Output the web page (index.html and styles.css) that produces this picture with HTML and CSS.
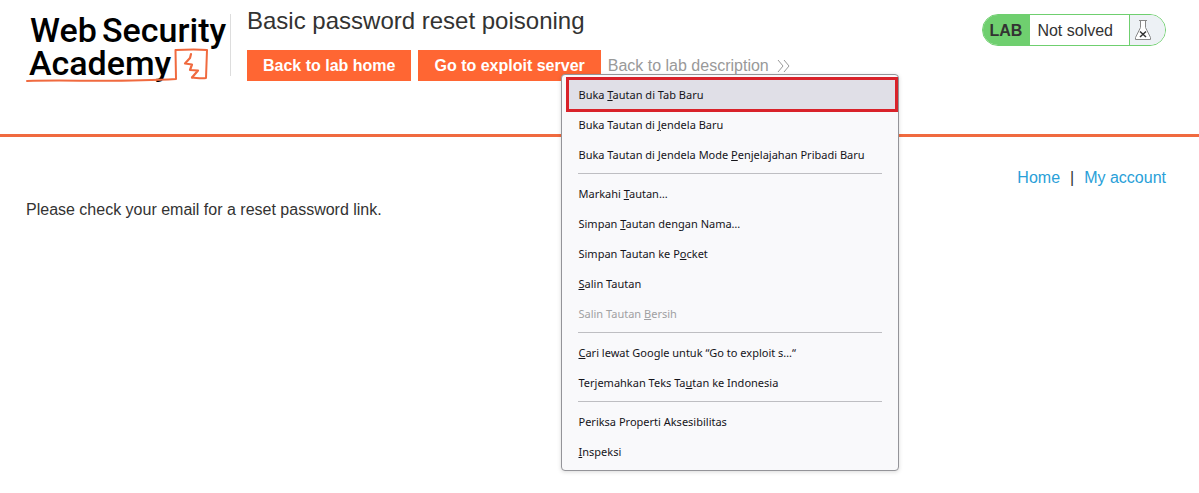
FILE: index.html
```html
<!DOCTYPE html>
<html lang="en">
<head>
<meta charset="utf-8">
<meta name="viewport" content="width=device-width, initial-scale=1">
<title>Basic password reset poisoning</title>
<link rel="stylesheet" href="styles.css">
</head>
<body>
<header class="lab-header">
  <a class="logo" href="#" aria-label="Web Security Academy">
    <svg class="logo-art" viewBox="0 0 205 90" width="205" height="90">
      <g class="logo-text">
        <text x="4" y="42">Web</text>
        <text x="76" y="42">Security</text>
        <text x="3" y="75">Academy</text>
      </g>
      <g fill="none" stroke="#f06a3f" stroke-linecap="round" stroke-linejoin="round">
        <path stroke-width="2" d="M1 81C40 79.500 90 82.500 150 79L149.500 50C160 49.500 170 49 181 50L180 78C176 79 172 78 166 77.500"/>
        <path stroke-width="2.200" d="M165 54L164 58L159 63.500L166 64.500L164 70L172 70.500L166 77.500"/>
      </g>
    </svg>
  </a>
  <div class="title-block">
    <h2 class="title">Basic password reset poisoning</h2>
    <nav class="actions">
      <a class="button" href="#">Back to lab home</a>
      <div class="menu-anchor">
        <a class="button" href="#">Go to exploit server</a>
        <div class="menu" role="menu">
          <button class="item active" role="menuitem">Buka <u>T</u>autan di Tab Baru</button>
          <button class="item" role="menuitem">Buka Tautan di <u>J</u>endela Baru</button>
          <button class="item" role="menuitem">Buka Tautan di Jendela Mode <u>P</u>enjelajahan Pribadi Baru</button>
          <hr class="rule">
          <button class="item" role="menuitem">Markahi <u>T</u>autan…</button>
          <button class="item" role="menuitem">Simpan <u>T</u>autan dengan Nama…</button>
          <button class="item" role="menuitem">Simpan Tautan ke P<u>o</u>cket</button>
          <button class="item" role="menuitem"><u>S</u>alin Tautan</button>
          <button class="item" role="menuitem" disabled>Salin Tautan <u>B</u>ersih</button>
          <hr class="rule">
          <button class="item" role="menuitem"><u>C</u>ari lewat Google untuk “Go to exploit s…“</button>
          <button class="item" role="menuitem">Terjemahkan Teks Ta<u>u</u>tan ke Indonesia</button>
          <hr class="rule">
          <button class="item" role="menuitem">Periksa Properti Aksesibilitas</button>
          <button class="item" role="menuitem"><u>I</u>nspeksi</button>
        </div>
      </div>
      <a class="back" href="#">Back to lab description
        <svg width="13" height="14" viewBox="0 0 13 14" fill="none" stroke="#999" aria-hidden="true"><path d="M1 1L6 7L1 13M7 1L12 7L7 13"/></svg>
      </a>
    </nav>
  </div>
  <div class="status">
    <span class="status-lab">LAB</span>
    <span class="status-text">Not solved</span>
    <span class="status-icon">
      <svg width="18" height="22" viewBox="0 0 18 22" fill="none" stroke="#888" aria-hidden="true"><path fill="#fff" d="M6.500 1.500V8.500L1.500 18.500V20.500H16.500V18.500L11.500 8.500V1.500"/><path d="M5 1.500H13"/><path stroke="#333" stroke-width="1.500" d="M6 12.500L12 18M12 12.500L6 18"/></svg>
    </span>
  </div>
</header>
<main class="page">
  <nav class="links"><a href="#">Home</a><span>|</span><a href="#">My account</a></nav>
  <p class="message">Please check your email for a reset password link.</p>
</main>
</body>
</html>
```
FILE: styles.css
```css
* { box-sizing: border-box; }

body {
  margin: 0;
  min-height: 100vh;
  background: #fff;
  color: #333332;
  font: 16px/20px "Liberation Sans", Arial, sans-serif;
}

a { color: #29a0d8; text-decoration: none; }

.lab-header {
  display: flex;
  align-items: flex-start;
  padding: 0 33px 0 26px;
  min-height: 137px;
  border-bottom: 3px solid #f06a3f;
}

.logo { flex: none; margin-right: 16px; }

.logo-art {
  display: block;
  background: linear-gradient(#ddd, #ddd) right 14px / 1px 62px no-repeat;
}

.logo-text {
  fill: #000;
  font: 500 34px Roboto, sans-serif;
}

.title-block { flex: 1; padding-top: 8px; }

.title {
  margin: 0 0 16px;
  font-size: 24px;
  font-weight: 400;
  line-height: 26px;
}

.actions { display: flex; gap: 7px; }

.button {
  display: block;
  padding: 0 16px;
  background: #ff6633;
  color: #fff;
  font-weight: 700;
  line-height: 31px;
  white-space: nowrap;
}

.back {
  display: flex;
  align-items: center;
  gap: 8px;
  color: #999;
  line-height: 31px;
  white-space: nowrap;
}

.menu-anchor { position: relative; }

.menu {
  position: absolute;
  top: 24px;
  left: 143px;
  z-index: 1;
  width: 338px;
  padding: 5px 0 3px;
  border: 1px solid #949499;
  border-radius: 4px;
  background: #f9f9fb;
  box-shadow: 0 1px 4px rgba(0, 0, 0, 0.15);
}

.item {
  display: block;
  width: 100%;
  height: 30px;
  padding: 0 16px;
  border: 0;
  background: none;
  color: #15141a;
  font: 11px/30px "Noto Sans", "Open Sans", sans-serif;
  text-align: left;
  white-space: nowrap;
}

.item:disabled { color: #a0a0a2; }

.active {
  width: auto;
  min-width: calc(100% - 4px);
  margin: -3px 0 -2px 4px;
  height: 35px;
  padding: 0 9px;
  border: 3px solid #d9222a;
  background: #e0dfe7;
}

.item u { text-underline-offset: 1px; }

.rule {
  height: 1px;
  margin: 3px 16px 5px;
  border: 0;
  background: #bebec2;
}

.status {
  display: flex;
  margin-top: 14px;
  height: 32px;
  overflow: hidden;
  border: 1px solid #6fcf6f;
  border-radius: 16px;
  line-height: 32px;
}

.status-lab {
  padding: 0 8px 0 7px;
  background: #6fcf6f;
  font-weight: 700;
}

.status-text { padding: 0 16px 0 7px; }

.status-icon {
  display: flex;
  align-items: center;
  width: 36px;
  padding-left: 4px;
  border-left: 1px solid #6fcf6f;
  background: #edf1f5;
}

.page { padding: 31px 33px 0 26px; }

.links {
  display: flex;
  justify-content: flex-end;
  gap: 10px;
}

.message { margin: 12px 0 0; }
```
